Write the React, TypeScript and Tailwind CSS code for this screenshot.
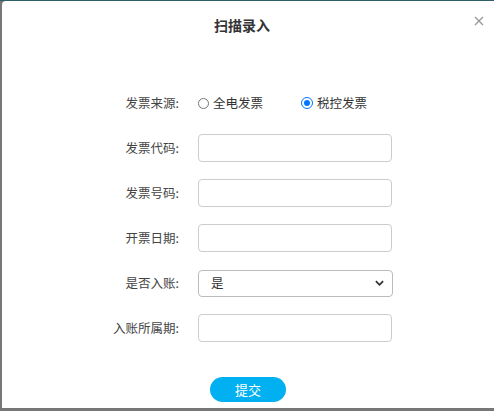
const fields = ['发票代码', '发票号码', '开票日期']

function Label({ text }: { text: string }) {
  return <div className="w-[177px] shrink-0 text-right text-[12.5px] text-[#444]">{text}:</div>
}

export default function App() {
  return (
    <div
      className="w-[494px] h-[411px] overflow-hidden bg-[#777] border-t border-[#2e5f66] pl-[2px] pb-[3px] flex"
      style={{ fontFamily: '"Microsoft YaHei", "Noto Sans CJK SC", "Noto Sans", sans-serif' }}
    >
      <div className="relative flex-1 bg-white rounded-tl-[4px] flex flex-col">
        <div className="h-[48px] flex items-center justify-center pr-[12px] text-[14px] font-semibold text-[#333]">扫描录入</div>
        <button className="absolute right-[10px] top-[15px] w-[10px] h-[10px]">
          <svg viewBox="0 0 10 10" className="w-[10px] h-[10px]" stroke="#999" strokeWidth="1.4">
            <path d="M1 1L9 9M9 1L1 9" />
          </svg>
        </button>

        <div className="mt-[40px] flex flex-col gap-[17px]">
          <div className="h-[28px] flex items-center">
            <Label text="发票来源" />
            <div className="ml-[19px] flex items-center text-[12.5px] text-[#333]">
              <span className="w-[11px] h-[11px] rounded-full border border-[#777] bg-white" />
              <span className="ml-[4px]">全电发票</span>
              <span className="ml-[38px] w-[12px] h-[12px] rounded-full border-[1.5px] border-[#0075ff] flex items-center justify-center">
                <span className="w-[6px] h-[6px] rounded-full bg-[#0075ff]" />
              </span>
              <span className="ml-[4px]">税控发票</span>
            </div>
          </div>

          {fields.map((f) => (
            <div key={f} className="h-[28px] flex items-center">
              <Label text={f} />
              <input className="ml-[19px] w-[194px] h-[28px] border border-[#ccc] rounded-[4px] outline-none" />
            </div>
          ))}

          <div className="h-[28px] flex items-center">
            <Label text="是否入账" />
            <div className="ml-[19px] w-[195px] h-[27px] border border-[#bbb] rounded-[4px] flex items-center justify-between pl-[12px] pr-[8px] text-[12.5px] text-[#333]">
              <span>是</span>
              <svg viewBox="0 0 10 6" className="w-[9px] h-[6px]" fill="none" stroke="#333" strokeWidth="2">
                <path d="M1 1L5 5L9 1" />
              </svg>
            </div>
          </div>

          <div className="h-[28px] flex items-center">
            <Label text="入账所属期" />
            <input className="ml-[19px] w-[194px] h-[28px] border border-[#ccc] rounded-[4px] outline-none" />
          </div>
        </div>

        <div className="mt-[35px] flex justify-center">
          <button className="w-[76px] h-[25px] rounded-full bg-[#00b0f0] text-white text-[13px]">提交</button>
        </div>
      </div>
    </div>
  )
}
